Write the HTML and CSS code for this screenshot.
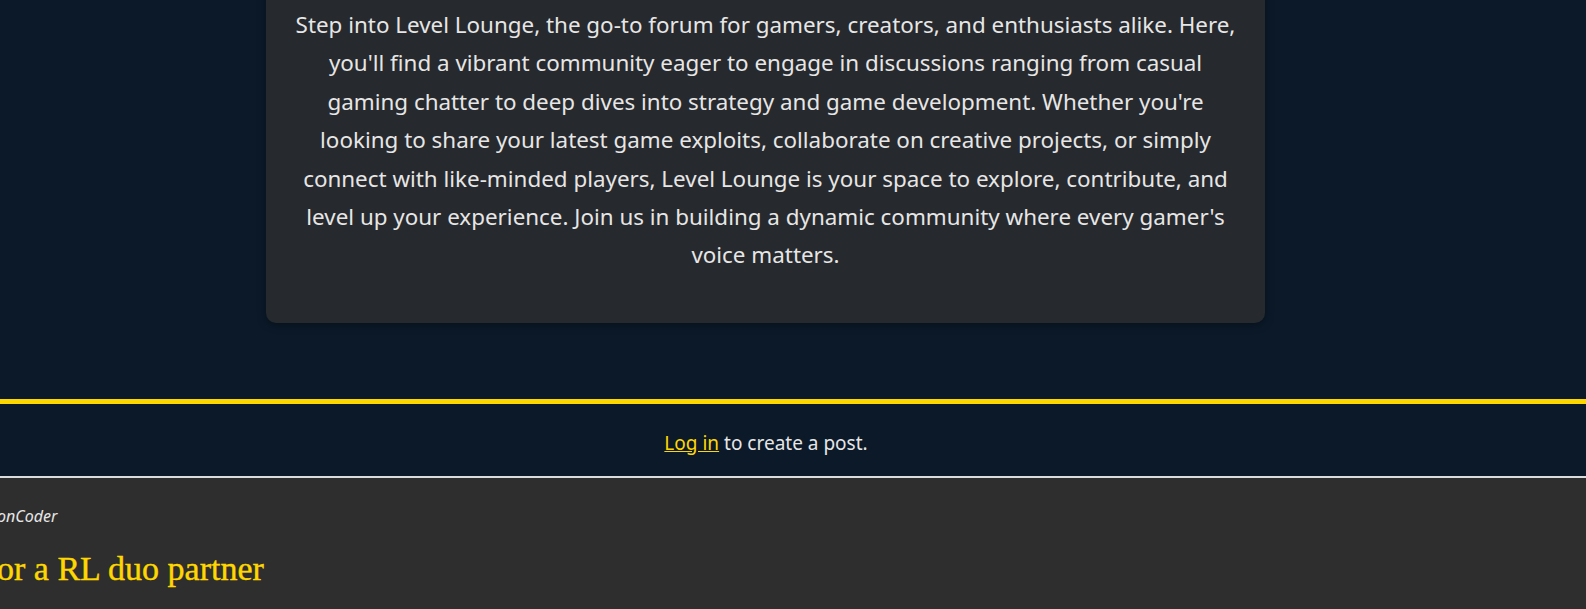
FILE: index.html
```html
<!DOCTYPE html>
<html>
<head>
<meta charset="utf-8">
<link rel="stylesheet" href="styles.css">
</head>
<body>
<div class="hero">
  <div class="card">
    <p class="intro">Step into Level Lounge, the go-to forum for gamers, creators, and enthusiasts alike. Here,<br> you'll find a vibrant community eager to engage in discussions ranging from casual<br> gaming chatter to deep dives into strategy and game development. Whether you're<br> looking to share your latest game exploits, collaborate on creative projects, or simply<br> connect with like-minded players, Level Lounge is your space to explore, contribute, and<br> level up your experience. Join us in building a dynamic community where every gamer's<br> voice matters.</p>
  </div>
</div>
<div class="login-row">
  <p><a href="#" class="login-link">Log in</a> to create a post.</p>
</div>
<div class="posts">
  <div class="post">
    <div class="author">onCoder</div>
    <h2 class="post-title">or a RL duo partner</h2>
  </div>
</div>
</body>
</html>
```
FILE: styles.css
```css
html, body {
  margin: 0;
  padding: 0;
  background: #0b1929;
  overflow: hidden;
}
body {
  font-family: "Noto Sans", "Open Sans", sans-serif;
  color: #e8e8e8;
}
.hero {
  padding-bottom: 76px;
  border-bottom: 5px solid #ffd700;
}
.card {
  width: 999px;
  margin: -40px 0 0 266px;
  box-sizing: border-box;
  padding: 46px 16px 48px;
  background: #26292d;
  border-radius: 10px;
  box-shadow: 0 2px 8px rgba(0,0,0,0.35);
}
.intro {
  margin: 0;
  text-align: center;
  font-size: 22.4px;
  line-height: 38.4px;
  color: #e6e6e6;
  white-space: nowrap;
}
.login-row {
  display: flex;
  justify-content: center;
  padding-right: 54px;
  height: 72px;
  align-items: center;
  border-bottom: 2px solid #dcdcdc;
}
.login-row p {
  margin: 6px 0 0;
  font-size: 19px;
  color: #e6e6e6;
}
.login-link {
  color: #ffd700;
  text-decoration: underline;
}
.posts {
  background: #2e2e2e;
  height: 140px;
}
.post {
  margin-left: -3px;
  padding-top: 27px;
}
.author {
  font-style: italic;
  font-size: 16px;
  color: #e6e6e6;
}
.post-title {
  margin: 23px 0 0;
  font-family: "Liberation Serif", serif;
  font-weight: normal;
  font-size: 34px;
  color: #ffd700;
  -webkit-text-stroke: 0.4px #ffd700;
}
```
